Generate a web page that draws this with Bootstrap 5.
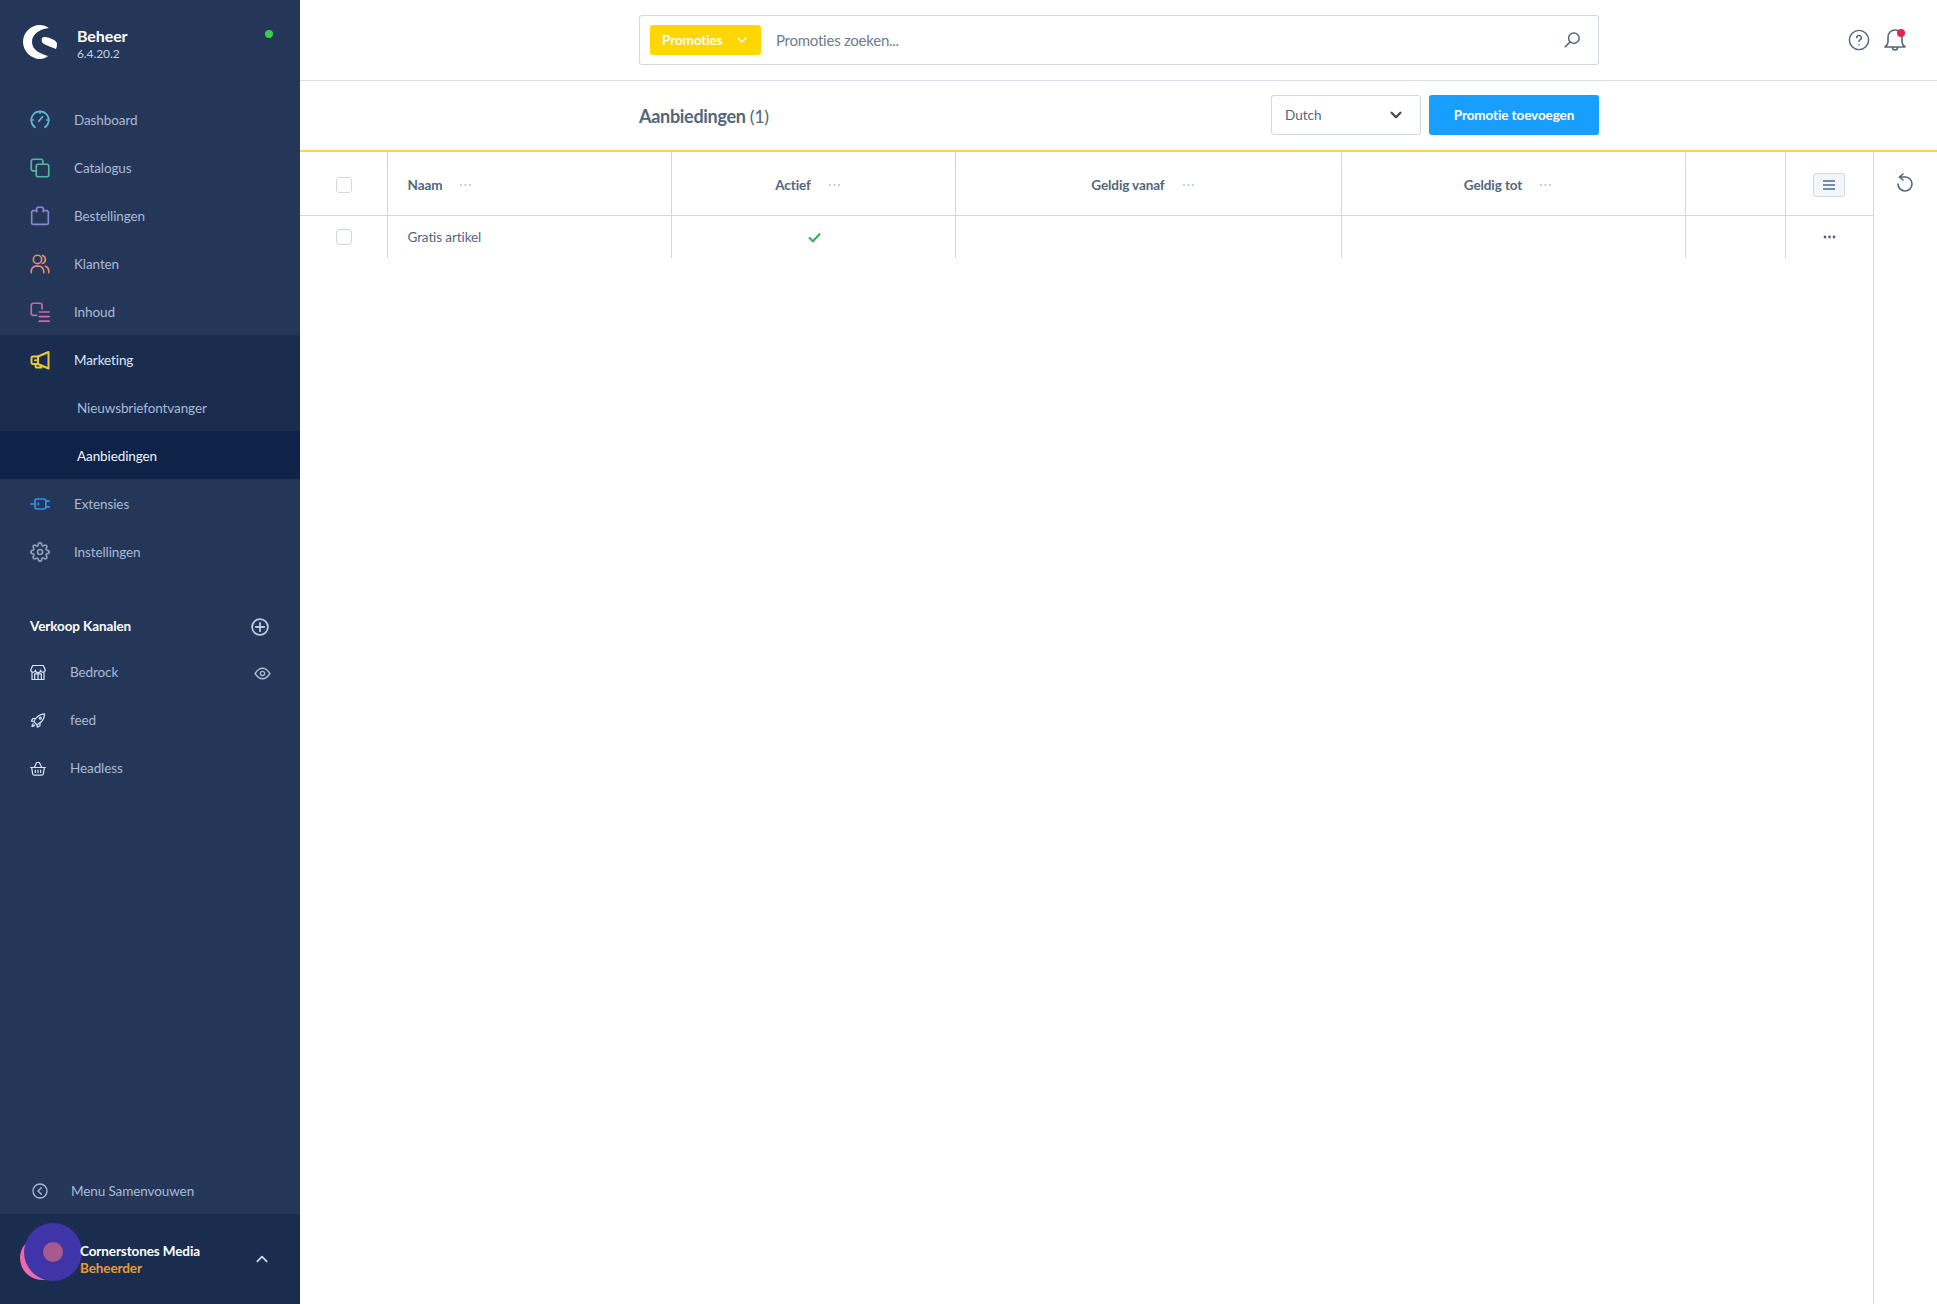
<!DOCTYPE html>
<html lang="nl">
<head>
    <meta charset="UTF-8">
    <meta name="viewport" content="width=device-width, initial-scale=1.0">
    <title>Aanbiedingen</title>
    <link href="https://cdn.jsdelivr.net/npm/bootstrap@5.3.0/dist/css/bootstrap.min.css" rel="stylesheet">
    <style>
        html, body { height: 100%; }
        body { font-family: "Lato", "Liberation Sans", sans-serif; font-size: 13.5px; letter-spacing: -0.1px; color: #52667a; overflow: hidden; }
        svg { display: block; flex: none; fill: none; stroke: currentColor; stroke-width: 2; stroke-linecap: round; stroke-linejoin: round; }

        .side-bar { width: 300px; flex: none; background: #243758; color: #a9b9d6; height: 100vh; }
        .side-head { height: 95px; padding: 25px 27px 0 23px; }
        .side-logo { width: 35px; height: 35px; fill: #fff; stroke: none; }
        .side-title { color: #fff; font-weight: 700; font-size: 16px; line-height: 20px; margin-left: 19px; margin-top: 1px; }
        .side-version { font-size: 12px; line-height: 16px; color: #c5d0e2; margin-left: 19px; }
        .side-dot { width: 8px; height: 8px; background: #37d046; margin-top: 5px; }

        .menu-row { height: 48px; padding-left: 30px; padding-top: 2px; gap: 24px; color: #a9b9d6; text-decoration: none; }
        .menu-row svg { width: 20px; height: 20px; }
        .menu-open { background: #1a2d4e; }
        .menu-open > .menu-row:first-child { color: #dde6f4; }
        .menu-sub { padding-left: 77px; gap: 0; }
        .menu-current { background: #0f2247; color: #f0f4fa !important; }
        .c-dash { color: #5fb8d9; } .c-cat { color: #52b8a0; } .c-ord { color: #8a85d8; }
        .c-cus { color: #e88a72; } .c-con { color: #c868b0; } .c-mar { color: #e6cd3a; }
        .c-ext { color: #2f93e8; } .c-set { color: #8fa0bb; }

        .chan-title { margin-top: 39px; margin-bottom: 9px; padding: 1px 30px 0; height: 24px; color: #fff; font-weight: 700; }
        .chan-plus { width: 18px; height: 18px; color: #bcc9df; stroke-width: 2.4; margin-right: 1px; }
        .chan-row { height: 48px; padding: 2px 30px 0; gap: 24px; color: #a9b9d6; }
        .chan-row > svg:first-child { width: 16px; height: 17px; color: #dbe4f2; stroke-width: 1.8; }
        .chan-eye { width: 17px; height: 17px; margin-left: auto; margin-top: 2px; margin-right: -1px; }

        .collapse-row { height: 48px; padding-left: 32px; padding-top: 2px; gap: 23px; color: #a9b9d6; }
        .collapse-row svg { width: 16px; height: 16px; }
        .user-box { height: 90px; background: #1a2d4e; padding-left: 80px; padding-right: 30px; }
        .user-pink { width: 44px; height: 44px; left: 20px; top: 22px; background: #ee6aae; }
        .user-ring { width: 58px; height: 58px; left: 24px; top: 9px; background: #3f35a8; }
        .user-core { width: 20px; height: 20px; left: 43px; top: 28px; background: #a85a8f; }
        .user-text { margin-top: 2px; }
        .user-name { color: #fff; font-weight: 700; line-height: 17px; }
        .user-role { color: #e79a3d; font-weight: 700; line-height: 17px; }
        .user-caret { width: 14px; height: 14px; color: #cfd9e9; margin-left: auto; margin-right: 1px; stroke-width: 3; }

        .top-row { height: 81px; border-bottom: 1px solid #d9dfe6; padding-left: 339px; padding-right: 30px; }
        .find-box { width: 960px; height: 50px; border: 1px solid #d1d9e0; border-radius: 3px; padding: 0 17px 0 10px; }
        .find-type { background: #ffd700; color: #fff; font-weight: 700; border: 0; flex: none; width: 111px; height: 30px; border-radius: 3px; font-size: 13.5px; letter-spacing: -0.1px; padding: 0 13px 0 12px; }
        .find-type:hover, .find-type:active { background: #ffd700 !important; color: #fff !important; }
        .find-type svg { width: 12px; height: 12px; stroke-width: 3; }
        .find-input { font-size: 15px; letter-spacing: -0.25px; padding: 1px 0 0 15px; color: #52667a; }
        .find-input::placeholder { color: #6e7c8c; }
        .find-icon { width: 18px; height: 18px; color: #52667a; }
        .top-icon { width: 22px; height: 22px; color: #52667a; stroke-width: 1.6; }
        .top-bell { width: 24px; height: 24px; }
        .top-icons { gap: 13px; }
        .bell-dot { width: 8px; height: 8px; right: 2px; top: 1px; background: #de294c; }

        .page-row { height: 71px; border-bottom: 2px solid #ffd154; padding-left: 339px; padding-right: 338px; }
        .page-title { font-size: 18px; letter-spacing: -0.3px; font-weight: 700; color: #52667a; margin: 0; padding-top: 2px; }
        .page-title span { font-weight: 400; }
        .page-actions { margin-top: -1px; }
        .lang-pick { width: 150px; height: 40px; font-size: 13.5px; color: #52667a; border-color: #d1d9e0; border-radius: 3px; padding-left: 13px; margin-right: 8px; background-position: right 17px center; background-size: 14px; background-image: url("data:image/svg+xml,%3csvg xmlns='http://www.w3.org/2000/svg' viewBox='0 0 16 16'%3e%3cpath fill='none' stroke='%233d4c5c' stroke-linecap='round' stroke-linejoin='round' stroke-width='2.6' d='m3 5.5 5 5 5-5'/%3e%3c/svg%3e"); }
        .add-btn { background: #189eff; border: 0; color: #fff; font-weight: 700; width: 170px; height: 40px; border-radius: 3px; font-size: 13.5px; letter-spacing: -0.1px; padding: 0; }
        .add-btn:hover { background: #189eff; color: #fff; }

        .grid-wrap { width: 1573px; }
        .rail-col { border-left: 1px solid #d1d9e0; padding-top: 21px; }
        .rail-col svg { width: 20px; height: 20px; margin-left: 21px; color: #52667a; stroke-width: 1.6; }
        .promo-grid { table-layout: fixed; width: 1573px; margin: 0; color: #52667a; }
        .promo-grid th, .promo-grid td { padding: 0; vertical-align: middle; border-color: #d1d9e0; border-style: solid; border-width: 0 1px 0 0; box-shadow: none; }
        .promo-grid thead th { height: 63px; padding-top: 3px; border-bottom-width: 1px; font-weight: 700; }
        .promo-grid tbody td { height: 43px; padding-top: 1px; }
        .promo-grid tr > *:last-child { border-right: 0; }
        .promo-grid .form-check-input { width: 16px; height: 16px; margin: 0 auto; border-color: #d1d9e0; border-radius: 3px; display: block; float: none; position: relative; left: 1px; }
        .head-cell { padding-left: 20px; gap: 17px; }
        .head-mid { justify-content: center; padding-left: 0; padding-right: 10px; }
        .dots-pale { width: 13px; height: 4px; color: #b3bfcc; stroke: none; fill: currentColor; }
        .dots-row { width: 13px; height: 4px; color: #52667a; stroke: none; fill: currentColor; }
        .tick { width: 13px; height: 13px; color: #37b24d; stroke-width: 4; position: relative; left: 1px; }
        .cols-btn { width: 32px; height: 24px; background: #f3f6f9; border: 1px solid #d1d9e0; border-radius: 3px; padding: 0; color: #758ca3; }
        .cols-btn svg { width: 14px; height: 12px; stroke-width: 2; stroke-linecap: butt; }
    </style>
</head>
<body class="d-flex">

<aside class="side-bar d-flex flex-column">
    <div class="side-head d-flex align-items-start">
        <svg class="side-logo" viewBox="23 25 35 35"><path d="M49 28C46 26 43 25 40 25 30 25 23 33 23 42 23 51 31 59 40 59 43 59 46 58 48 56 42 54 32 51 32 42 32 33 41 29 49 28Z"/><path d="M42 38C44 36 48 37 52 39 55 40 57 42 57 44 57 46 56.5 48 56 49 52 47 47 46 44 44 42 43 41 40 42 38Z"/></svg>
        <div class="flex-grow-1">
            <div class="side-title">Beheer</div>
            <div class="side-version">6.4.20.2</div>
        </div>
        <span class="side-dot rounded-circle"></span>
    </div>

    <nav>
        <a class="menu-row d-flex align-items-center" href="#"><svg class="c-dash" viewBox="0 0 24 24"><path d="M6 20.7A10.5 10.5 0 1 1 18 20.7"/><path d="M10.5 13.5 15 8M12 1.5v2.500M1.500 12H4M20 12h2.500"/></svg>Dashboard</a>
        <a class="menu-row d-flex align-items-center" href="#"><svg class="c-cat" viewBox="0 0 24 24"><path d="M7.500 15.500H4A2.500 2.500 0 0 1 1.500 13V4A2.500 2.500 0 0 1 4 1.500h9A2.500 2.500 0 0 1 15.500 4v3.500"/><rect x="7.500" y="7.500" width="15" height="15" rx="2.500"/></svg>Catalogus</a>
        <a class="menu-row d-flex align-items-center" href="#"><svg class="c-ord" viewBox="0 0 24 24"><path d="M7 5.500H3.500L2 7v13a2 2 0 0 0 2 2h16a2 2 0 0 0 2-2V7l-1.500-1.500H17"/><path d="M8 7V3.500a2 2 0 0 1 2-2h4a2 2 0 0 1 2 2V7"/></svg>Bestellingen</a>
        <a class="menu-row d-flex align-items-center" href="#"><svg class="c-cus" viewBox="0 0 24 24"><circle cx="9" cy="6.500" r="5"/><path d="M1.500 22.500v-2a6 6 0 0 1 6-6h3a6 6 0 0 1 6 6v2M15 1.800a5 5 0 0 1 0 9.500M18.500 14.800a6 6 0 0 1 4 5.500v2.200"/></svg>Klanten</a>
        <a class="menu-row d-flex align-items-center" href="#"><svg class="c-con" viewBox="0 0 24 24"><path d="M8 16H4a2.500 2.500 0 0 1-2.500-2.500V4A2.500 2.500 0 0 1 4 1.500h8A2.500 2.500 0 0 1 14.500 4v4"/><path d="M11 12h12M11 17.500h12M11 23h12"/></svg>Inhoud</a>
        <div class="menu-open">
            <a class="menu-row d-flex align-items-center" href="#"><svg class="c-mar" viewBox="0 0 20 20"><path d="M18.500 2 8 6.500v7.500l10.500 4.500z"/><path d="M8 6.500H3A1.500 1.500 0 0 0 1.500 8v4.500A1.500 1.500 0 0 0 3 14h5M5 14l1 3.500h5.500l-1-2M5 10.200h1"/></svg>Marketing</a>
            <a class="menu-row menu-sub d-flex align-items-center" href="#">Nieuwsbriefontvanger</a>
            <a class="menu-row menu-sub menu-current d-flex align-items-center" href="#">Aanbiedingen</a>
        </div>
        <a class="menu-row d-flex align-items-center" href="#"><svg class="c-ext" viewBox="0 0 24 24"><rect x="6" y="6" width="13" height="12" rx="2.500"/><path d="M1 12h5M19 8.500h4M19 15.500h4M10 11v2"/></svg>Extensies</a>
        <a class="menu-row d-flex align-items-center" href="#"><svg class="c-set" viewBox="0 0 24 24"><circle cx="12" cy="12" r="3"/><path d="M19.400 15a1.650 1.650 0 0 0 .33 1.820l.06.06a2 2 0 0 1 0 2.830 2 2 0 0 1-2.830 0l-.06-.06a1.650 1.650 0 0 0-1.820-.33 1.650 1.650 0 0 0-1 1.510V21a2 2 0 0 1-2 2 2 2 0 0 1-2-2v-.09A1.650 1.650 0 0 0 9 19.400a1.650 1.650 0 0 0-1.820.33l-.06.06a2 2 0 0 1-2.830 0 2 2 0 0 1 0-2.830l.06-.06a1.650 1.650 0 0 0 .33-1.820 1.650 1.650 0 0 0-1.510-1H3a2 2 0 0 1-2-2 2 2 0 0 1 2-2h.09A1.650 1.650 0 0 0 4.600 9a1.650 1.650 0 0 0-.33-1.820l-.06-.06a2 2 0 0 1 0-2.830 2 2 0 0 1 2.830 0l.06.06a1.650 1.650 0 0 0 1.820.33H9a1.650 1.650 0 0 0 1-1.510V3a2 2 0 0 1 2-2 2 2 0 0 1 2 2v.09a1.650 1.650 0 0 0 1 1.510 1.650 1.650 0 0 0 1.820-.33l.06-.06a2 2 0 0 1 2.830 0 2 2 0 0 1 0 2.830l-.06.06a1.650 1.650 0 0 0-.33 1.820V9a1.650 1.650 0 0 0 1.510 1H21a2 2 0 0 1 2 2 2 2 0 0 1-2 2h-.09a1.650 1.650 0 0 0-1.510 1z"/></svg>Instellingen</a>
    </nav>

    <div class="chan-title d-flex align-items-center justify-content-between">
        <span>Verkoop Kanalen</span>
        <svg class="chan-plus" viewBox="0 0 24 24"><circle cx="12" cy="12" r="10.500"/><path d="M12 6.500v11M6.500 12h11"/></svg>
    </div>
    <div class="chan-row d-flex align-items-center"><svg viewBox="0 0 24 24"><path d="M4 1.500h16l3 7a3.700 3.700 0 0 1-7.300 0 3.700 3.700 0 0 1-7.400 0A3.700 3.700 0 0 1 1 8.500zM3 11v11.500h18V11M7 22.500V14h10v8.500M12 14v8.500"/></svg>Bedrock<svg class="chan-eye" viewBox="0 0 24 24"><path d="M1.500 12C5 6.500 8.500 4.500 12 4.500s7 2 10.500 7.500c-3.500 5.500-7 7.500-10.500 7.500S5 17.500 1.500 12z"/><circle cx="12" cy="12" r="3"/></svg></div>
    <div class="chan-row d-flex align-items-center"><svg viewBox="0 0 24 24"><path d="M22 2c-6 .5-10.500 3-13.500 7l-3 4.500 5 5 4.500-3c4-3 6.500-7.500 7-13.500z"/><path d="M8.500 9H4l-2 4 3.500.5M15 15.500V20l-4 2-.5-3.500M5 17c-1.500 1-2 3-2 4 1 0 3-.5 4-2"/><circle cx="15.500" cy="8.500" r="1.500"/></svg>feed</div>
    <div class="chan-row d-flex align-items-center"><svg viewBox="0 0 24 24"><path d="M1 10.500h22M2.500 10.500l1.500 9.500a2.500 2.500 0 0 0 2.500 2h11a2.500 2.500 0 0 0 2.500-2l1.500-9.500M6.500 10.500l3.500-7.500h4l3.500 7.500M8 14.500v3.500M12 14.500v3.500M16 14.500v3.500"/></svg>Headless</div>

    <div class="mt-auto">
        <div class="collapse-row d-flex align-items-center"><svg viewBox="0 0 24 24"><circle cx="12" cy="12" r="10.500"/><path d="m14 7-5 5 5 5"/></svg>Menu Samenvouwen</div>
        <div class="user-box d-flex align-items-center position-relative">
            <span class="user-pink rounded-circle position-absolute"></span>
            <span class="user-ring rounded-circle position-absolute"></span>
            <span class="user-core rounded-circle position-absolute"></span>
            <div class="user-text position-relative">
                <div class="user-name">Cornerstones Media</div>
                <div class="user-role">Beheerder</div>
            </div>
            <svg class="user-caret" viewBox="0 0 24 24"><path d="m4 16 8-8 8 8"/></svg>
        </div>
    </div>
</aside>

<main class="flex-grow-1 d-flex flex-column">
    <div class="top-row d-flex align-items-center justify-content-between">
        <div class="find-box d-flex align-items-center">
            <button class="btn find-type d-flex align-items-center justify-content-between" type="button">Promoties<svg viewBox="0 0 24 24"><path d="m4 8 8 8 8-8"/></svg></button>
            <input class="form-control find-input border-0 shadow-none bg-transparent" type="text" placeholder="Promoties zoeken...">
            <svg class="find-icon" viewBox="0 0 24 24"><circle cx="14.500" cy="9.500" r="7"/><path d="M9.500 14.500 3 21"/></svg>
        </div>
        <div class="top-icons d-flex align-items-center">
            <svg class="top-icon" viewBox="0 0 24 24"><circle cx="12" cy="12" r="10.500"/><path d="M9.500 9.500a2.500 2.500 0 1 1 3.500 2.300c-.7.400-1 .9-1 1.700M12 17v.3"/></svg>
            <div class="position-relative">
                <svg class="top-icon top-bell" viewBox="0 0 24 24"><path d="M12 2a7 7 0 0 0-7 7v5c0 2-1 3.500-3 5h20c-2-1.500-3-3-3-5V9a7 7 0 0 0-7-7zM9.500 19.500a2.500 2.500 0 0 0 5 0"/></svg>
                <span class="bell-dot rounded-circle position-absolute"></span>
            </div>
        </div>
    </div>

    <div class="page-row d-flex align-items-center justify-content-between">
        <h1 class="page-title">Aanbiedingen <span>(1)</span></h1>
        <div class="page-actions d-flex align-items-center">
            <select class="form-select lang-pick shadow-none"><option>Dutch</option></select>
            <button class="btn add-btn" type="button">Promotie toevoegen</button>
        </div>
    </div>

    <div class="d-flex flex-grow-1">
        <div class="grid-wrap">
            <table class="table promo-grid">
                <colgroup>
                    <col style="width:87px"><col style="width:284px"><col style="width:284px"><col style="width:386px"><col style="width:344px"><col style="width:100px"><col style="width:88px">
                </colgroup>
                <thead>
                    <tr>
                        <th><input class="form-check-input" type="checkbox"></th>
                        <th><div class="head-cell d-flex align-items-center">Naam<svg class="dots-pale" viewBox="0 0 13 4"><circle cx="2" cy="2" r="1"/><circle cx="6.500" cy="2" r="1"/><circle cx="11" cy="2" r="1"/></svg></div></th>
                        <th><div class="head-cell head-mid d-flex align-items-center">Actief<svg class="dots-pale" viewBox="0 0 13 4"><circle cx="2" cy="2" r="1"/><circle cx="6.500" cy="2" r="1"/><circle cx="11" cy="2" r="1"/></svg></div></th>
                        <th><div class="head-cell head-mid d-flex align-items-center">Geldig vanaf<svg class="dots-pale" viewBox="0 0 13 4"><circle cx="2" cy="2" r="1"/><circle cx="6.500" cy="2" r="1"/><circle cx="11" cy="2" r="1"/></svg></div></th>
                        <th><div class="head-cell head-mid d-flex align-items-center">Geldig tot<svg class="dots-pale" viewBox="0 0 13 4"><circle cx="2" cy="2" r="1"/><circle cx="6.500" cy="2" r="1"/><circle cx="11" cy="2" r="1"/></svg></div></th>
                        <th></th>
                        <th><button class="btn cols-btn d-flex align-items-center justify-content-center mx-auto" type="button"><svg viewBox="0 0 14 12"><path d="M1 2h12M1 6h12M1 10h12"/></svg></button></th>
                    </tr>
                </thead>
                <tbody>
                    <tr>
                        <td><input class="form-check-input" type="checkbox"></td>
                        <td class="ps-3"><span class="ms-1">Gratis artikel</span></td>
                        <td><svg class="tick mx-auto" viewBox="0 0 24 24"><path d="m3 13 6 6L21 6"/></svg></td>
                        <td></td>
                        <td></td>
                        <td></td>
                        <td><svg class="dots-row mx-auto" viewBox="0 0 13 4"><circle cx="2" cy="2" r="1.400"/><circle cx="6.500" cy="2" r="1.400"/><circle cx="11" cy="2" r="1.400"/></svg></td>
                    </tr>
                </tbody>
            </table>
        </div>
        <div class="rail-col flex-grow-1">
            <svg viewBox="0 0 20 20"><path d="M8 1 4.500 4 8 7"/><path d="M5 4h5.500a7 7 0 1 1-7.500 7"/></svg>
        </div>
    </div>
</main>

<script src="https://cdn.jsdelivr.net/npm/bootstrap@5.3.0/dist/js/bootstrap.bundle.min.js"></script>
</body>
</html>
